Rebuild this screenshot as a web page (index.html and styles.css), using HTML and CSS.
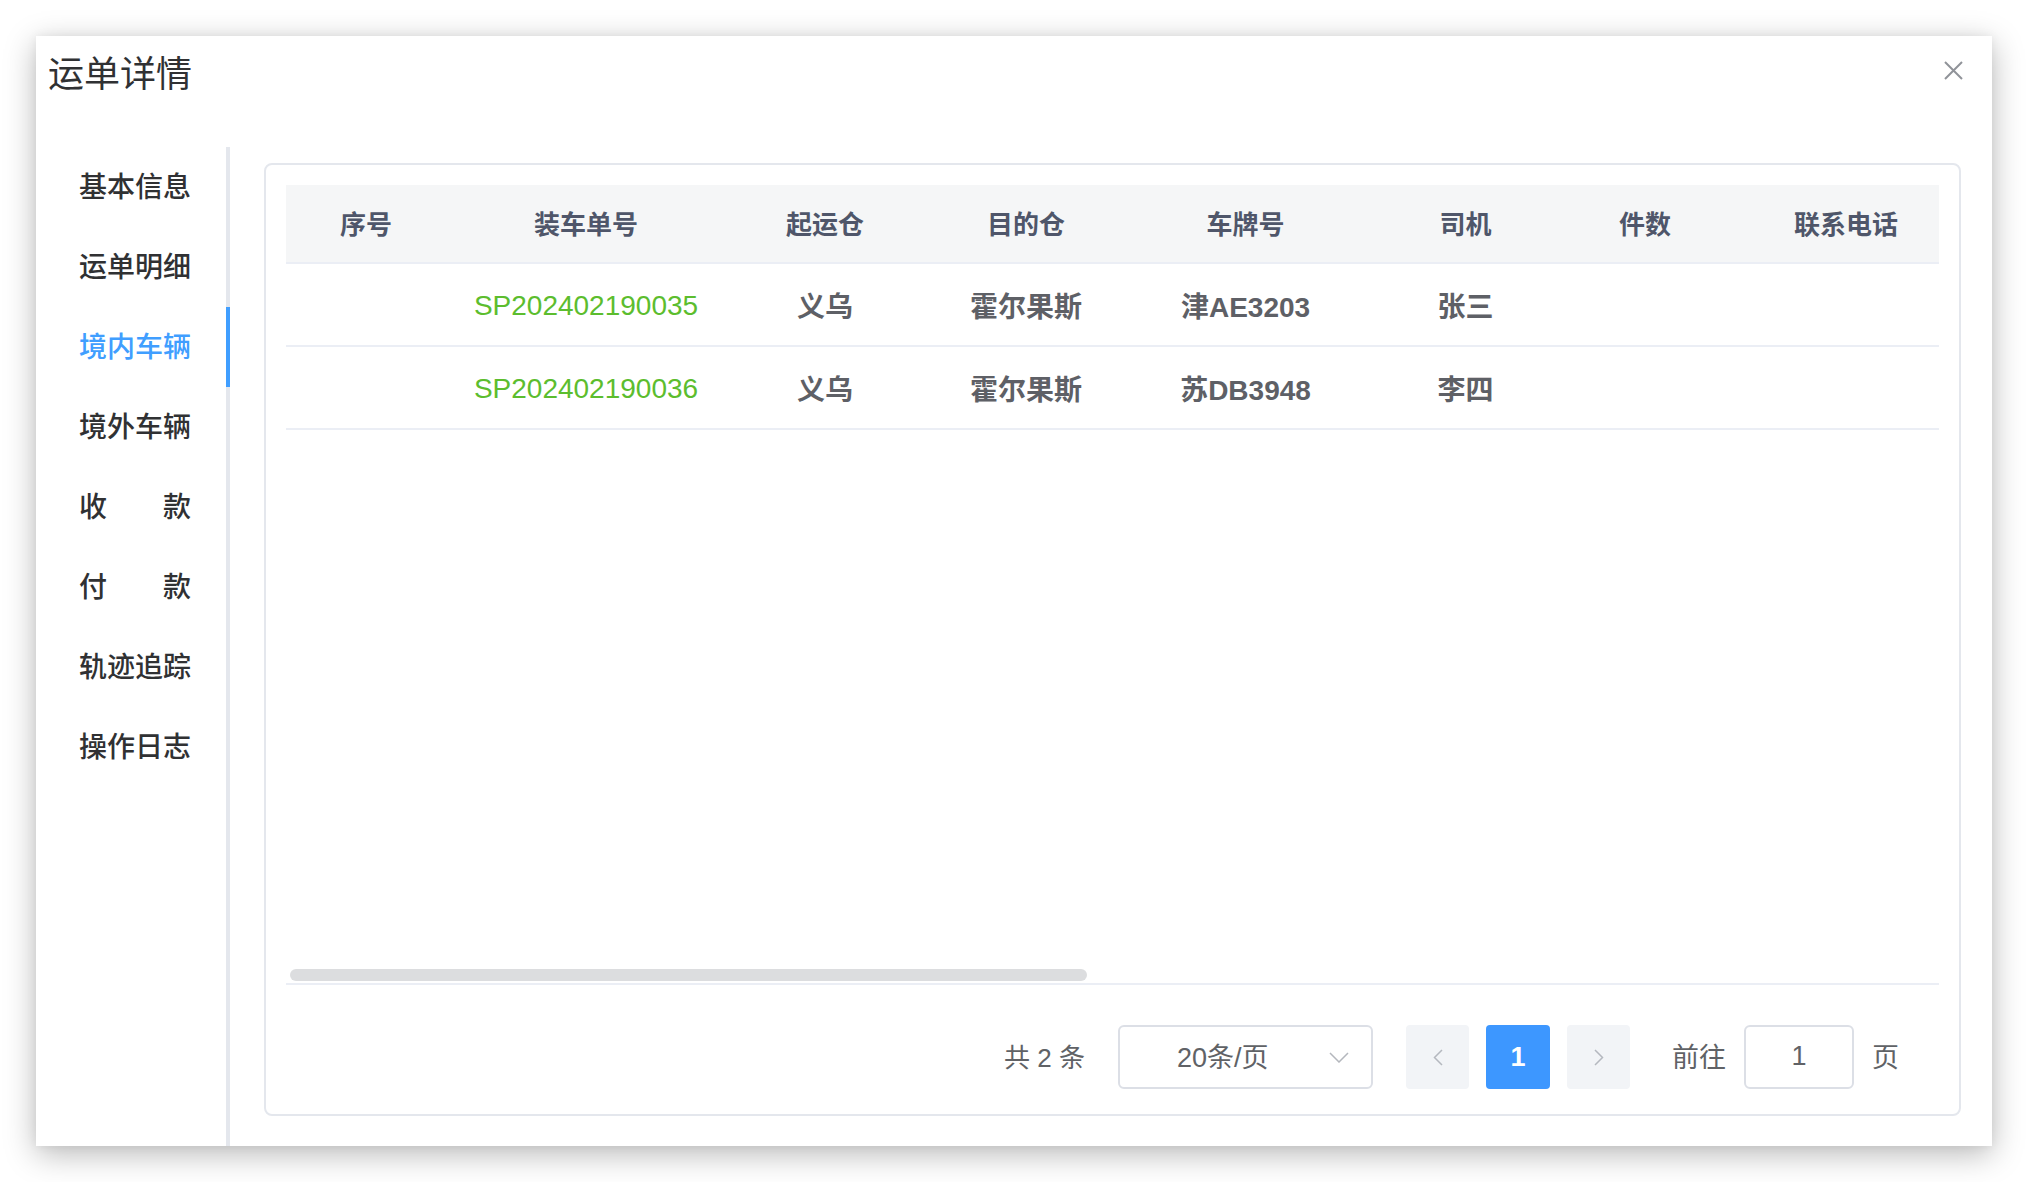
FILE: index.html
```html
<!DOCTYPE html>
<html lang="zh-CN">
<head>
<meta charset="utf-8">
<title>运单详情</title>
<link rel="stylesheet" href="styles.css">
</head>
<body>
<div class="dialog">
  <div class="dialog-header">
    <span class="dialog-title">运单详情</span>
    <button class="dialog-close" aria-label="关闭">
      <svg width="19" height="19" viewBox="0 0 19 19"><path d="M1 1L18 18M18 1L1 18" stroke="#909399" stroke-width="2" fill="none"/></svg>
    </button>
  </div>
  <div class="dialog-body">
    <nav class="side-nav">
      <div class="nav-item">基本信息</div>
      <div class="nav-item">运单明细</div>
      <div class="nav-item active">境内车辆</div>
      <div class="nav-item">境外车辆</div>
      <div class="nav-item">收　　款</div>
      <div class="nav-item">付　　款</div>
      <div class="nav-item">轨迹追踪</div>
      <div class="nav-item">操作日志</div>
    </nav>
    <section class="content">
      <div class="card">
        <div class="table-wrap">
          <div class="table">
            <div class="row head">
              <div class="cell">序号</div>
              <div class="cell">装车单号</div>
              <div class="cell">起运仓</div>
              <div class="cell">目的仓</div>
              <div class="cell">车牌号</div>
              <div class="cell">司机</div>
              <div class="cell">件数</div>
              <div class="cell">联系电话</div>
            </div>
            <div class="row">
              <div class="cell"></div>
              <div class="cell link">SP202402190035</div>
              <div class="cell">义乌</div>
              <div class="cell">霍尔果斯</div>
              <div class="cell">津AE3203</div>
              <div class="cell">张三</div>
              <div class="cell"></div>
              <div class="cell"></div>
            </div>
            <div class="row">
              <div class="cell"></div>
              <div class="cell link">SP202402190036</div>
              <div class="cell">义乌</div>
              <div class="cell">霍尔果斯</div>
              <div class="cell">苏DB3948</div>
              <div class="cell">李四</div>
              <div class="cell"></div>
              <div class="cell"></div>
            </div>
          </div>
          <div class="scroll-thumb"></div>
        </div>
        <div class="pagination">
          <span class="total">共 2 条</span>
          <div class="sizes">
            <span class="sizes-text">20条/页</span>
            <svg class="sizes-arrow" width="20" height="11" viewBox="0 0 20 11"><polyline points="1,1 10,10 19,1" fill="none" stroke="#b4b7bd" stroke-width="1.5"/></svg>
          </div>
          <button class="pg-btn nav-btn prev" aria-label="上一页">
            <svg width="10" height="17" viewBox="0 0 10 17"><polyline points="9,1 1.5,8.5 9,16" fill="none" stroke="#b4b8bf" stroke-width="1.5"/></svg>
          </button>
          <button class="pg-btn current">1</button>
          <button class="pg-btn nav-btn next" aria-label="下一页">
            <svg width="10" height="17" viewBox="0 0 10 17"><polyline points="1,1 8.5,8.5 1,16" fill="none" stroke="#b4b8bf" stroke-width="1.5"/></svg>
          </button>
          <span class="jump-label">前往</span>
          <div class="jump-input">1</div>
          <span class="jump-suffix">页</span>
        </div>
      </div>
    </section>
  </div>
</div>
</body>
</html>
```

FILE: styles.css
```css
* { box-sizing: border-box; }

html, body {
  margin: 0;
  padding: 0;
  background: #ffffff;
}

body {
  font-family: "Liberation Sans", "Noto Sans CJK SC", sans-serif;
  color: #303133;
}

.dialog {
  position: relative;
  margin: 36px;
  width: 1956px;
  height: 1110px;
  background: #ffffff;
  box-shadow: 0 8px 30px rgba(0, 0, 0, 0.28), 0 0 10px rgba(0, 0, 0, 0.06);
  display: flex;
  flex-direction: column;
}

.dialog-header {
  height: 111px;
  flex-shrink: 0;
  padding: 14px 0 0 12px;
}

.dialog-title {
  display: block;
  font-size: 36px;
  line-height: 50px;
  font-weight: 400;
  color: #303133;
}

.dialog-close {
  position: absolute;
  top: 25px;
  right: 29px;
  width: 19px;
  height: 19px;
  padding: 0;
  border: 0;
  background: transparent;
  display: flex;
}

.dialog-body {
  flex: 1;
  display: flex;
  min-height: 0;
}

.side-nav {
  width: 194px;
  flex-shrink: 0;
  border-right: 4px solid #e4e7ed;
  position: relative;
}

.nav-item {
  height: 80px;
  line-height: 82px;
  padding-left: 43px;
  font-size: 28px;
  font-weight: 500;
  color: #303133;
  white-space: pre;
  position: relative;
}

.nav-item.active {
  color: #409eff;
}

.nav-item.active::after {
  content: "";
  position: absolute;
  right: -4px;
  top: 0;
  width: 4px;
  height: 80px;
  background: #409eff;
}

.content {
  flex: 1;
  min-width: 0;
  padding: 16px 31px 30px 34px;
  display: flex;
}

.card {
  flex: 1;
  min-width: 0;
  border: 2px solid #e4e7ed;
  border-radius: 8px;
  padding: 20px 20px 25px 20px;
  display: flex;
  flex-direction: column;
}

.table-wrap {
  position: relative;
  height: 800px;
  flex-shrink: 0;
  overflow: hidden;
  border-bottom: 2px solid #ebeef5;
}

.table {
  width: 1684px;
}

.row {
  display: grid;
  grid-template-columns: 160px 280px 198px 204px 235px 205px 154px 248px;
  height: 83px;
  border-bottom: 2px solid #ebeef5;
}

.row.head {
  height: 79px;
  background: #f5f6f7;
}

.cell {
  display: flex;
  align-items: center;
  justify-content: center;
  font-size: 28px;
  font-weight: 700;
  color: #5e6066;
  white-space: nowrap;
}

.row.head .cell {
  font-size: 26px;
  font-weight: 700;
  color: #4f566a;
  padding-bottom: 2px;
}

.cell.link {
  color: #5cbd2e;
  font-weight: 400;
  padding-top: 3px;
}

.scroll-thumb {
  position: absolute;
  left: 4px;
  bottom: 2px;
  width: 797px;
  height: 12px;
  border-radius: 6px;
  background: #dcdddf;
}

.pagination {
  margin-top: 40px;
  height: 64px;
  flex-shrink: 0;
  display: flex;
  align-items: center;
  justify-content: flex-end;
  padding-right: 40px;
  font-size: 27px;
  color: #606266;
}

.total,
.jump-label,
.jump-suffix {
  padding-bottom: 4px;
}

.total {
  font-size: 26px;
  margin-right: 33px;
}

.sizes {
  width: 255px;
  height: 64px;
  border: 2px solid #dcdfe6;
  border-radius: 6px;
  display: flex;
  align-items: center;
  padding-left: 57px;
  padding-right: 22px;
  margin-right: 33px;
}

.sizes-text {
  flex: 1;
  color: #606266;
  padding-bottom: 3px;
}

.pg-btn {
  width: 63px;
  height: 64px;
  border: 0;
  border-radius: 4px;
  padding: 0;
  display: flex;
  align-items: center;
  justify-content: center;
  font-family: inherit;
  font-size: 27px;
  font-weight: 700;
  margin-right: 17px;
}

.nav-btn {
  background: #f2f4f7;
}

.pg-btn.current {
  width: 64px;
  background: #3d97ff;
  color: #ffffff;
}

.pg-btn.next {
  margin-right: 42px;
}

.jump-label {
  margin-right: 18px;
}

.jump-input {
  width: 110px;
  height: 64px;
  border: 2px solid #dcdfe6;
  border-radius: 6px;
  display: flex;
  align-items: center;
  justify-content: center;
  margin-right: 18px;
  padding-bottom: 2px;
}
```
